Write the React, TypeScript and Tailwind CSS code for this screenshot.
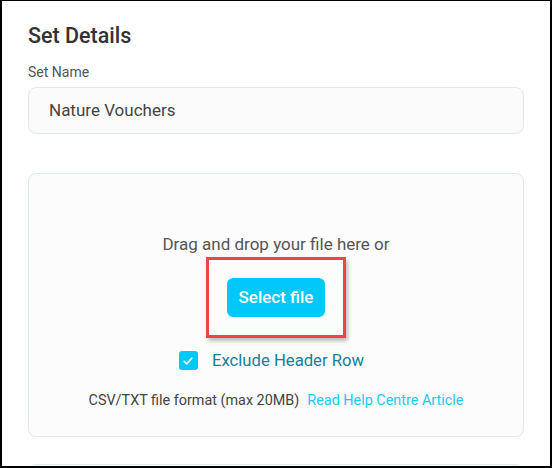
import React from "react";

export default function App() {
  return (
    <div
      className="w-[552px] h-[468px] overflow-hidden bg-white border-black border-l-2 border-r-2 border-t-[1px] border-b-2 relative"
      style={{ fontFamily: "Roboto, 'Noto Sans', sans-serif" }}
    >
      <div className="px-[26px] pt-[20px]">
        <h2 className="text-[21.5px] leading-[30px] font-medium text-[#333333]">Set Details</h2>
        <div className="mt-[13px] text-[14px] leading-[16px] text-[#555555]">Set Name</div>
        <div className="mt-[7px] h-[47px] rounded-[8px] border border-[#dcebee] bg-[#fbfbfb] flex items-center pl-[20px]">
          <span className="text-[17px] text-[#444444]">Nature Vouchers</span>
        </div>
        <div className="mt-[39px] h-[264px] rounded-[8px] border border-[#dcebee] bg-[#fcfcfc] flex flex-col items-center pt-[60px]">
          <div className="text-[17px] leading-[20px] text-[#555555]">Drag and drop your file here or</div>
          <div className="mt-[3px] w-[140px] h-[81px] border-[3px] border-[#ef4444] shadow-[2px_3px_4px_rgba(0,0,0,0.25)] flex items-center justify-center">
            <button className="w-[98px] h-[39px] rounded-[6px] bg-[#00c8f8] text-white text-[17px] font-medium">
              Select file
            </button>
          </div>
          <div className="mt-[10px] mr-[9px] flex items-center gap-[14px]">
            <div className="w-[19px] h-[19px] rounded-[3px] bg-[#00c8f8] flex items-center justify-center">
              <svg width="12" height="12" viewBox="0 0 12 12" fill="none">
                <path d="M2.2 6.3 L4.8 8.8 L9.8 3.2" stroke="white" strokeWidth="1.7" strokeLinecap="round" strokeLinejoin="round" />
              </svg>
            </div>
            <span className="text-[16.7px] text-[#15809c]">Exclude Header Row</span>
          </div>
          <div className="mt-[17px] flex items-center gap-[8px] text-[14.4px]">
            <span className="text-[#444444]">CSV/TXT file format (max 20MB)</span>
            <span className="text-[#1ec8f4]">Read Help Centre Article</span>
          </div>
        </div>
        <div className="mt-[27px] h-[10px] rounded-t-[8px] border border-[#dcebee] bg-[#fcfcfc]"></div>
      </div>
    </div>
  );
}
